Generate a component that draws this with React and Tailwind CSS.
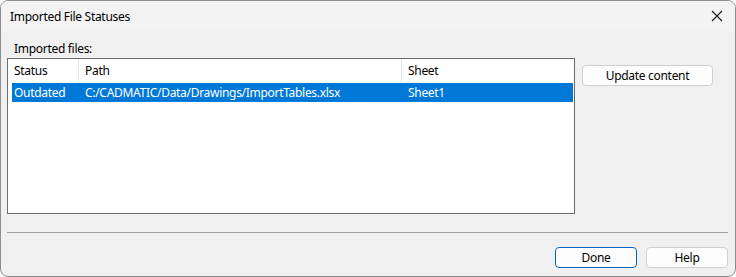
import React from "react";

export default function App() {
  const font = { fontFamily: '"Noto Sans", "Open Sans", sans-serif' };
  return (
    <div
      className="w-[736px] h-[277px] overflow-hidden bg-white"
      style={font}
    >
      <div className="w-[736px] h-[277px] rounded-[8px] border border-[#8e8e8e] bg-[#f0f0f0] flex flex-col overflow-hidden text-[12px] tracking-[-0.3px] text-black">
        {/* title bar */}
        <div className="h-[30px] bg-[#f3f3f3] flex items-center justify-between pl-[9px] pr-[10px] shrink-0">
          <span className="leading-none mt-[1px]">Imported File Statuses</span>
          <svg width="12" height="12" viewBox="0 0 12 12" className="mr-[2px]">
            <path d="M1 1 L11 11 M11 1 L1 11" stroke="#1a1a1a" strokeWidth="1.1" />
          </svg>
        </div>
        {/* body */}
        <div className="flex-1 flex flex-col px-[6px]">
          <div className="pl-[7px] pt-[10px] h-[27px] leading-[16px]">Imported files:</div>
          <div className="flex">
            <div className="w-[568px] h-[156px] border border-[#6b6b6b] bg-white flex flex-col">
              <div className="flex h-[23px] items-center">
                <div className="w-[71px] h-full pl-[6px] flex items-center border-r border-[#e5e5e5]">Status</div>
                <div className="w-[323px] h-full pl-[6px] flex items-center border-r border-[#e5e5e5]">Path</div>
                <div className="flex-1 pl-[6px] flex items-center">Sheet</div>
              </div>
              <div className="flex h-[19px] mt-[1px] ml-[4px] mr-[1px] bg-[#0078d7] text-white items-center">
                <div className="w-[67px] pl-[2px]">Outdated</div>
                <div className="w-[323px] pl-[6px]">C:/CADMATIC/Data/Drawings/ImportTables.xlsx</div>
                <div className="flex-1 pl-[6px]">Sheet1</div>
              </div>
            </div>
            <div className="ml-[7px] mt-[7px]">
              <button className="w-[131px] h-[21px] rounded-[4px] border border-[#d0d0d0] bg-[#fdfdfd] text-[12px] leading-none">
                Update content
              </button>
            </div>
          </div>
          <div className="mt-[18px] h-px bg-[#a0a0a0] w-[721px]" />
          <div className="flex justify-end gap-[9px] mt-[14px] pr-[1px]">
            <button className="w-[82px] h-[21px] rounded-[4px] border border-[#0067c0] bg-[#fdfdfd] text-[12px] leading-none">
              Done
            </button>
            <button className="w-[82px] h-[21px] rounded-[4px] border border-[#d0d0d0] bg-[#fdfdfd] text-[12px] leading-none">
              Help
            </button>
          </div>
        </div>
      </div>
    </div>
  );
}
